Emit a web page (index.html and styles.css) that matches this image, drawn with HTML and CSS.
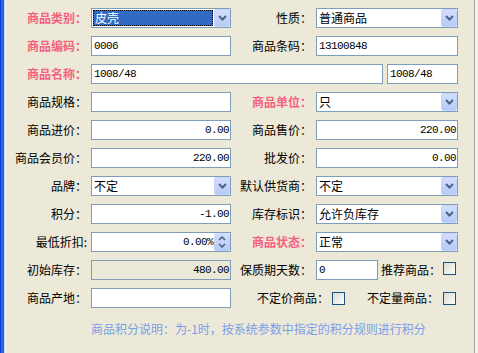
FILE: index.html
```html
<!DOCTYPE html>
<html lang="zh-CN">
<head>
<meta charset="utf-8">
<title>商品资料</title>
<link rel="stylesheet" href="styles.css">
</head>
<body>
<div class="window">
  <div class="form">
    <!-- row 1 -->
    <div class="lbl req">商品类别：</div>
    <div class="field combo"><span class="sel">皮壳</span><span class="btn"><svg width="9" height="6" viewBox="0 0 9 6"><path d="M1 1 L4.5 4.5 L8 1" fill="none" stroke="#4d6185" stroke-width="2"/></svg></span></div>
    <div class="lbl">性质：</div>
    <div class="field combo"><span class="val">普通商品</span><span class="btn"><svg width="9" height="6" viewBox="0 0 9 6"><path d="M1 1 L4.5 4.5 L8 1" fill="none" stroke="#4d6185" stroke-width="2"/></svg></span></div>

    <!-- row 2 -->
    <div class="lbl req">商品编码：</div>
    <div class="field"><span class="val num">0006</span></div>
    <div class="lbl">商品条码：</div>
    <div class="field"><span class="val num">13100848</span></div>

    <!-- row 3 -->
    <div class="lbl req">商品名称：</div>
    <div class="name-row">
      <div class="field wide"><span class="val num">1008/48</span></div>
      <div class="field short"><span class="val num">1008/48</span></div>
    </div>

    <!-- row 4 -->
    <div class="lbl">商品规格：</div>
    <div class="field"></div>
    <div class="lbl req">商品单位：</div>
    <div class="field combo"><span class="val">只</span><span class="btn"><svg width="9" height="6" viewBox="0 0 9 6"><path d="M1 1 L4.5 4.5 L8 1" fill="none" stroke="#4d6185" stroke-width="2"/></svg></span></div>

    <!-- row 5 -->
    <div class="lbl">商品进价：</div>
    <div class="field right"><span class="val num">0.00</span></div>
    <div class="lbl">商品售价：</div>
    <div class="field right"><span class="val num">220.00</span></div>

    <!-- row 6 -->
    <div class="lbl">商品会员价：</div>
    <div class="field right"><span class="val num">220.00</span></div>
    <div class="lbl">批发价：</div>
    <div class="field right"><span class="val num">0.00</span></div>

    <!-- row 7 -->
    <div class="lbl">品牌：</div>
    <div class="field combo"><span class="val">不定</span><span class="btn"><svg width="9" height="6" viewBox="0 0 9 6"><path d="M1 1 L4.5 4.5 L8 1" fill="none" stroke="#4d6185" stroke-width="2"/></svg></span></div>
    <div class="lbl">默认供货商：</div>
    <div class="field combo"><span class="val">不定</span><span class="btn"><svg width="9" height="6" viewBox="0 0 9 6"><path d="M1 1 L4.5 4.5 L8 1" fill="none" stroke="#4d6185" stroke-width="2"/></svg></span></div>

    <!-- row 8 -->
    <div class="lbl">积分：</div>
    <div class="field right"><span class="val num">-1.00</span></div>
    <div class="lbl">库存标识：</div>
    <div class="field combo"><span class="val">允许负库存</span><span class="btn"><svg width="9" height="6" viewBox="0 0 9 6"><path d="M1 1 L4.5 4.5 L8 1" fill="none" stroke="#4d6185" stroke-width="2"/></svg></span></div>

    <!-- row 9 -->
    <div class="lbl">最低折扣:</div>
    <div class="field right"><span class="val num">0.00%</span><span class="spin"><svg width="8" height="5" viewBox="0 0 8 5"><path d="M1 4 L4 1 L7 4" fill="none" stroke="#4d6185" stroke-width="1.6"/></svg><svg width="8" height="5" viewBox="0 0 8 5"><path d="M1 1 L4 4 L7 1" fill="none" stroke="#4d6185" stroke-width="1.6"/></svg></span></div>
    <div class="lbl req">商品状态：</div>
    <div class="field combo"><span class="val">正常</span><span class="btn"><svg width="9" height="6" viewBox="0 0 9 6"><path d="M1 1 L4.5 4.5 L8 1" fill="none" stroke="#4d6185" stroke-width="2"/></svg></span></div>

    <!-- row 10 -->
    <div class="lbl">初始库存：</div>
    <div class="field right disabled"><span class="val num">480.00</span></div>
    <div class="lbl">保质期天数：</div>
    <div class="shelf">
      <div class="field days"><span class="val num">0</span></div>
      <span class="lbl inline">推荐商品：</span>
      <span class="check"></span>
    </div>

    <!-- row 11 -->
    <div class="lbl">商品产地：</div>
    <div class="field"></div>
    <div class="flags">
      <span class="lbl inline">不定价商品：</span>
      <span class="check"></span>
      <span class="lbl inline gap">不定量商品：</span>
      <span class="check"></span>
    </div>

    <!-- row 12 -->
    <div class="note">商品积分说明：为-1时，按系统参数中指定的积分规则进行积分</div>
  </div>
</div>
</body>
</html>
```

FILE: styles.css
```css
html, body {
  margin: 0;
  padding: 0;
  height: 100%;
  overflow: hidden;
}

body {
  background: #ece9d8;
  font-family: "Noto Sans CJK SC", "Noto Sans", sans-serif;
  font-size: 12px;
  color: #000;
}

.window {
  height: 353px;
  box-sizing: border-box;
  background:
    linear-gradient(to right, #0a3dd0 0, #0a3dd0 1px, #1f66ee 1px, #1f66ee 4px, #c9d5ef 4px, #c9d5ef 5px, #f5f4ee 5px, #f5f4ee 6px, transparent 6px),
    linear-gradient(to left, #f4f3ee 0, #f4f3ee 3px, #a8a596 3px, #a8a596 4px, #ece9d8 4px);
}

.form {
  display: grid;
  grid-template-columns: 83px 140px 77px 142px;
  grid-auto-rows: 20px;
  column-gap: 4px;
  row-gap: 8px;
  padding: 8px 0 0 4px;
}

.lbl {
  display: flex;
  align-items: center;
  justify-content: flex-end;
  white-space: nowrap;
  line-height: 14px;
}

.req {
  color: #f5617f;
  font-weight: bold;
}

.field {
  box-sizing: border-box;
  height: 20px;
  border: 1px solid #7f9db9;
  background: #fff;
  display: flex;
  align-items: flex-start;
  overflow: hidden;
}

.field.right {
  justify-content: flex-end;
}

.field.disabled {
  background: #ece9d8;
}

.val {
  padding: 1px 2px 0 2px;
  line-height: 15px;
  white-space: nowrap;
}

.right .val {
  padding-right: 1px;
}

.num {
  font-family: "Liberation Mono", "DejaVu Sans Mono", monospace;
  font-size: 11px;
  letter-spacing: -0.6px;
  padding-top: 2px;
}

.combo .val {
  flex: 1;
}

.btn {
  width: 16px;
  height: 18px;
  margin-left: auto;
  box-sizing: border-box;
  border-radius: 2px;
  background: linear-gradient(#d2defc, #b6caf6);
  border: 1px solid #c6d4f7;
  display: flex;
  align-items: center;
  justify-content: center;
}

.sel {
  flex: 1;
  margin: 1px 1px 1px 1px;
  height: 16px;
  box-sizing: border-box;
  background: #316ac5;
  color: #fff;
  border: 1px dotted #000;
  line-height: 13px;
  padding-left: 1px;
}

.spin {
  width: 16px;
  height: 18px;
  margin-left: 0;
  box-sizing: border-box;
  border-radius: 2px;
  background: linear-gradient(#d2defc, #b6caf6);
  display: flex;
  flex-direction: column;
  align-items: center;
  justify-content: space-around;
  padding: 2px 0;
}

.name-row {
  grid-column: 2 / 5;
  display: flex;
  gap: 4px;
}

.field.wide {
  width: 292px;
}

.field.short {
  width: 71px;
}

.shelf {
  display: flex;
  align-items: center;
}

.field.days {
  width: 62px;
  flex: none;
}

.lbl.inline {
  display: inline-flex;
}

.shelf .lbl.inline {
  margin-left: 3px;
  width: 60px;
  justify-content: flex-start;
}

.check {
  width: 13px;
  height: 13px;
  box-sizing: border-box;
  border: 1px solid #1c5180;
  background: linear-gradient(135deg, #dcdcd5, #fbfbf9);
  flex: none;
}

.shelf .check {
  margin-left: 2px;
  align-self: flex-start;
  margin-top: 2px;
}

.flags {
  grid-column: 3 / 5;
  display: flex;
  align-items: center;
  padding-left: 22px;
}

.flags .lbl.inline {
  width: 72px;
  justify-content: flex-start;
  margin-right: 3px;
}

.flags .lbl.gap {
  margin-left: 22px;
  margin-right: 4px;
}

.note {
  grid-column: 2 / 5;
  color: #7b9ee8;
  padding-top: 6px;
  line-height: 14px;
  white-space: nowrap;
}
```
